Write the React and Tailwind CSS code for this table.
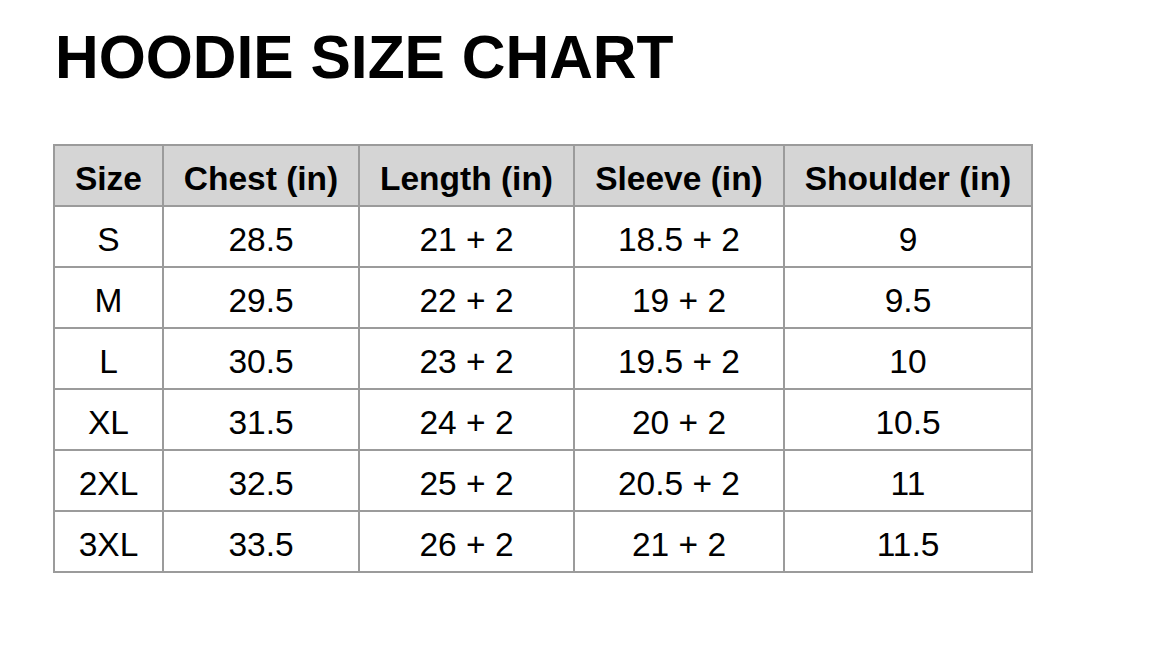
import React from 'react';

const headers = ['Size', 'Chest (in)', 'Length (in)', 'Sleeve (in)', 'Shoulder (in)'];

const rows = [
  ['S', '28.5', '21 + 2', '18.5 + 2', '9'],
  ['M', '29.5', '22 + 2', '19 + 2', '9.5'],
  ['L', '30.5', '23 + 2', '19.5 + 2', '10'],
  ['XL', '31.5', '24 + 2', '20 + 2', '10.5'],
  ['2XL', '32.5', '25 + 2', '20.5 + 2', '11'],
  ['3XL', '33.5', '26 + 2', '21 + 2', '11.5'],
];

const widths = ['w-[109px]', 'w-[196px]', 'w-[215px]', 'w-[210px]', 'w-[248px]'];

const App = () => {
  return (
    <div className="min-h-[647px] bg-white pl-[53px] pt-[27px] text-black font-['Liberation_Sans',Arial,sans-serif]">
      <h1 className="ml-[2px] text-[60.5px] leading-[60px] font-bold">HOODIE SIZE CHART</h1>
      <table className="mt-[57px] border-collapse table-fixed w-[980px]">
        <colgroup>
          {widths.map((w, i) => (
            <col key={i} className={w} />
          ))}
        </colgroup>
        <thead>
          <tr className="bg-[#d5d5d5] h-[61px]">
            {headers.map((h) => (
              <th key={h} className="border-2 border-[#9b9b9b] text-[33.5px] leading-none font-bold text-center px-0 pt-[7px] pb-0">
                {h}
              </th>
            ))}
          </tr>
        </thead>
        <tbody>
          {rows.map((r) => (
            <tr key={r[0]} className="h-[61px]">
              {r.map((c, i) => (
                <td key={i} className="border-2 border-[#9b9b9b] text-[33.5px] leading-none text-center px-0 pt-[7px] pb-0">
                  {c}
                </td>
              ))}
            </tr>
          ))}
        </tbody>
      </table>
    </div>
  );
};

export default App;
